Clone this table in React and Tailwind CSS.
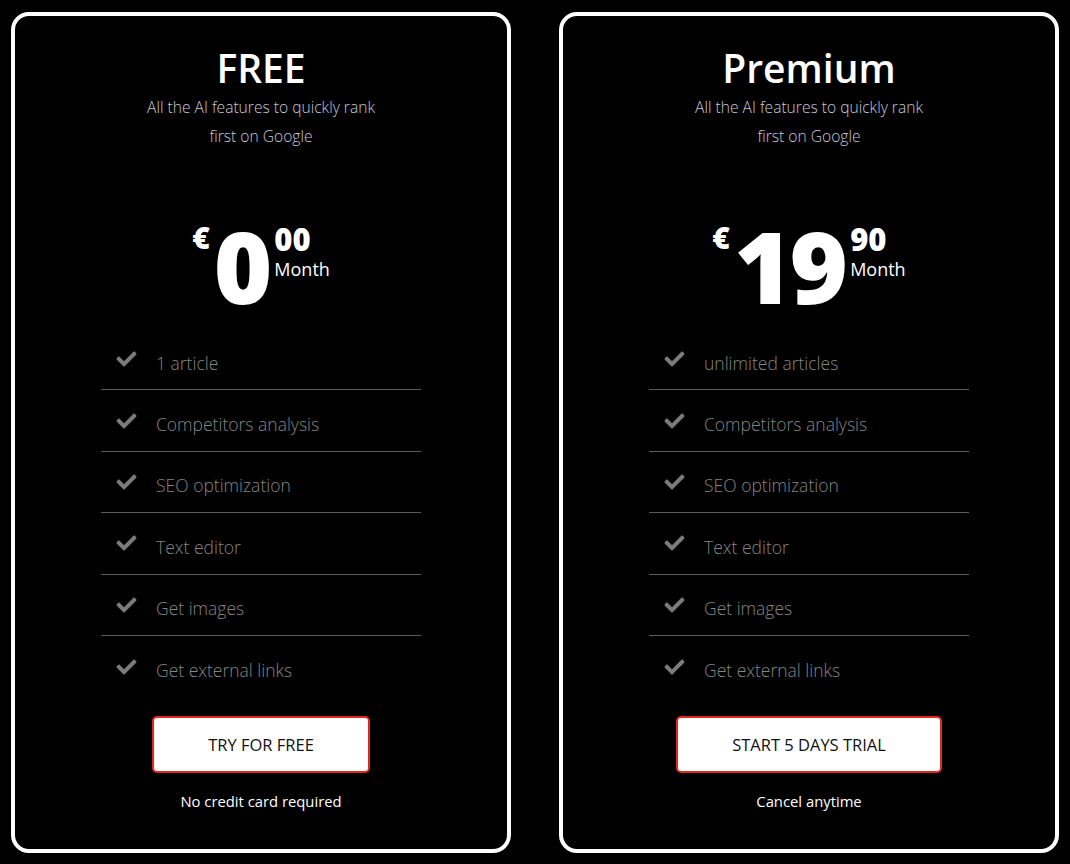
import { FaCheck } from "react-icons/fa";

const plans = [
  {
    name: "FREE",
    whole: "0",
    cents: "00",
    first: "1 article",
    cta: "TRY FOR FREE",
    note: "No credit card required",
  },
  {
    name: "Premium",
    whole: "19",
    cents: "90",
    first: "unlimited articles",
    cta: "START 5 DAYS TRIAL",
    note: "Cancel anytime",
  },
];

const rest = [
  "Competitors analysis",
  "SEO optimization",
  "Text editor",
  "Get images",
  "Get external links",
];

function PlanCard({ plan }) {
  const features = [plan.first, ...rest];
  return (
    <div className="w-[500px] h-[841px] border-4 border-white rounded-[18px] bg-black flex flex-col items-center">
      <h2 className="mt-[26px] text-[39px] leading-[52px] font-semibold text-white">
        {plan.name}
      </h2>
      <p className="text-[15.6px] leading-[29px] font-light text-[#c9c9d9] text-center w-[240px] -mt-[1px]">
        All the AI features to quickly rank first on Google
      </p>

      <div className="mt-[74px] flex items-start">
        <span className="text-[30px] leading-none font-extrabold text-white mt-[-2px] mr-[4px]">
          €
        </span>
        <span className="text-[100px] leading-[80px] font-extrabold text-white tracking-[-3px]">
          {plan.whole}
        </span>
        <div className="flex flex-col ml-[5px]">
          <span className="text-[31px] leading-[26px] font-extrabold text-white mt-[1px]">
            {plan.cents}
          </span>
          <span className="text-[18px] leading-[24px] text-white mt-[5px]">Month</span>
        </div>
      </div>

      <ul className="mt-[24px] w-[320px]">
        {features.map((f, i) => (
          <li
            key={f}
            className={
              "h-[61.4px] flex items-center gap-[18px] pl-[14px] " +
              (i < features.length - 1 ? "border-b border-[#5a5a5a]" : "")
            }
          >
            <FaCheck className="w-[23px] h-[20px] text-[#7b7b7b]" />
            <span className="text-[17.5px] font-light text-[#858585] mt-[7px]">{f}</span>
          </li>
        ))}
      </ul>

      <button className="mt-[19px] h-[57px] px-[54px] bg-white border-2 border-[#e4261c] rounded-[5px] text-[16.5px] text-[#111] font-normal pt-[2px]">
        {plan.cta}
      </button>
      <p className="mt-[17px] text-[14.8px] text-white">{plan.note}</p>
    </div>
  );
}

export default function App() {
  return (
    <div
      className="w-[1070px] h-[864px] bg-black flex gap-[48px] pl-[11px] pt-[12px]"
      style={{ fontFamily: '"Open Sans", "Noto Sans", sans-serif' }}
    >
      {plans.map((p) => (
        <PlanCard key={p.name} plan={p} />
      ))}
    </div>
  );
}
